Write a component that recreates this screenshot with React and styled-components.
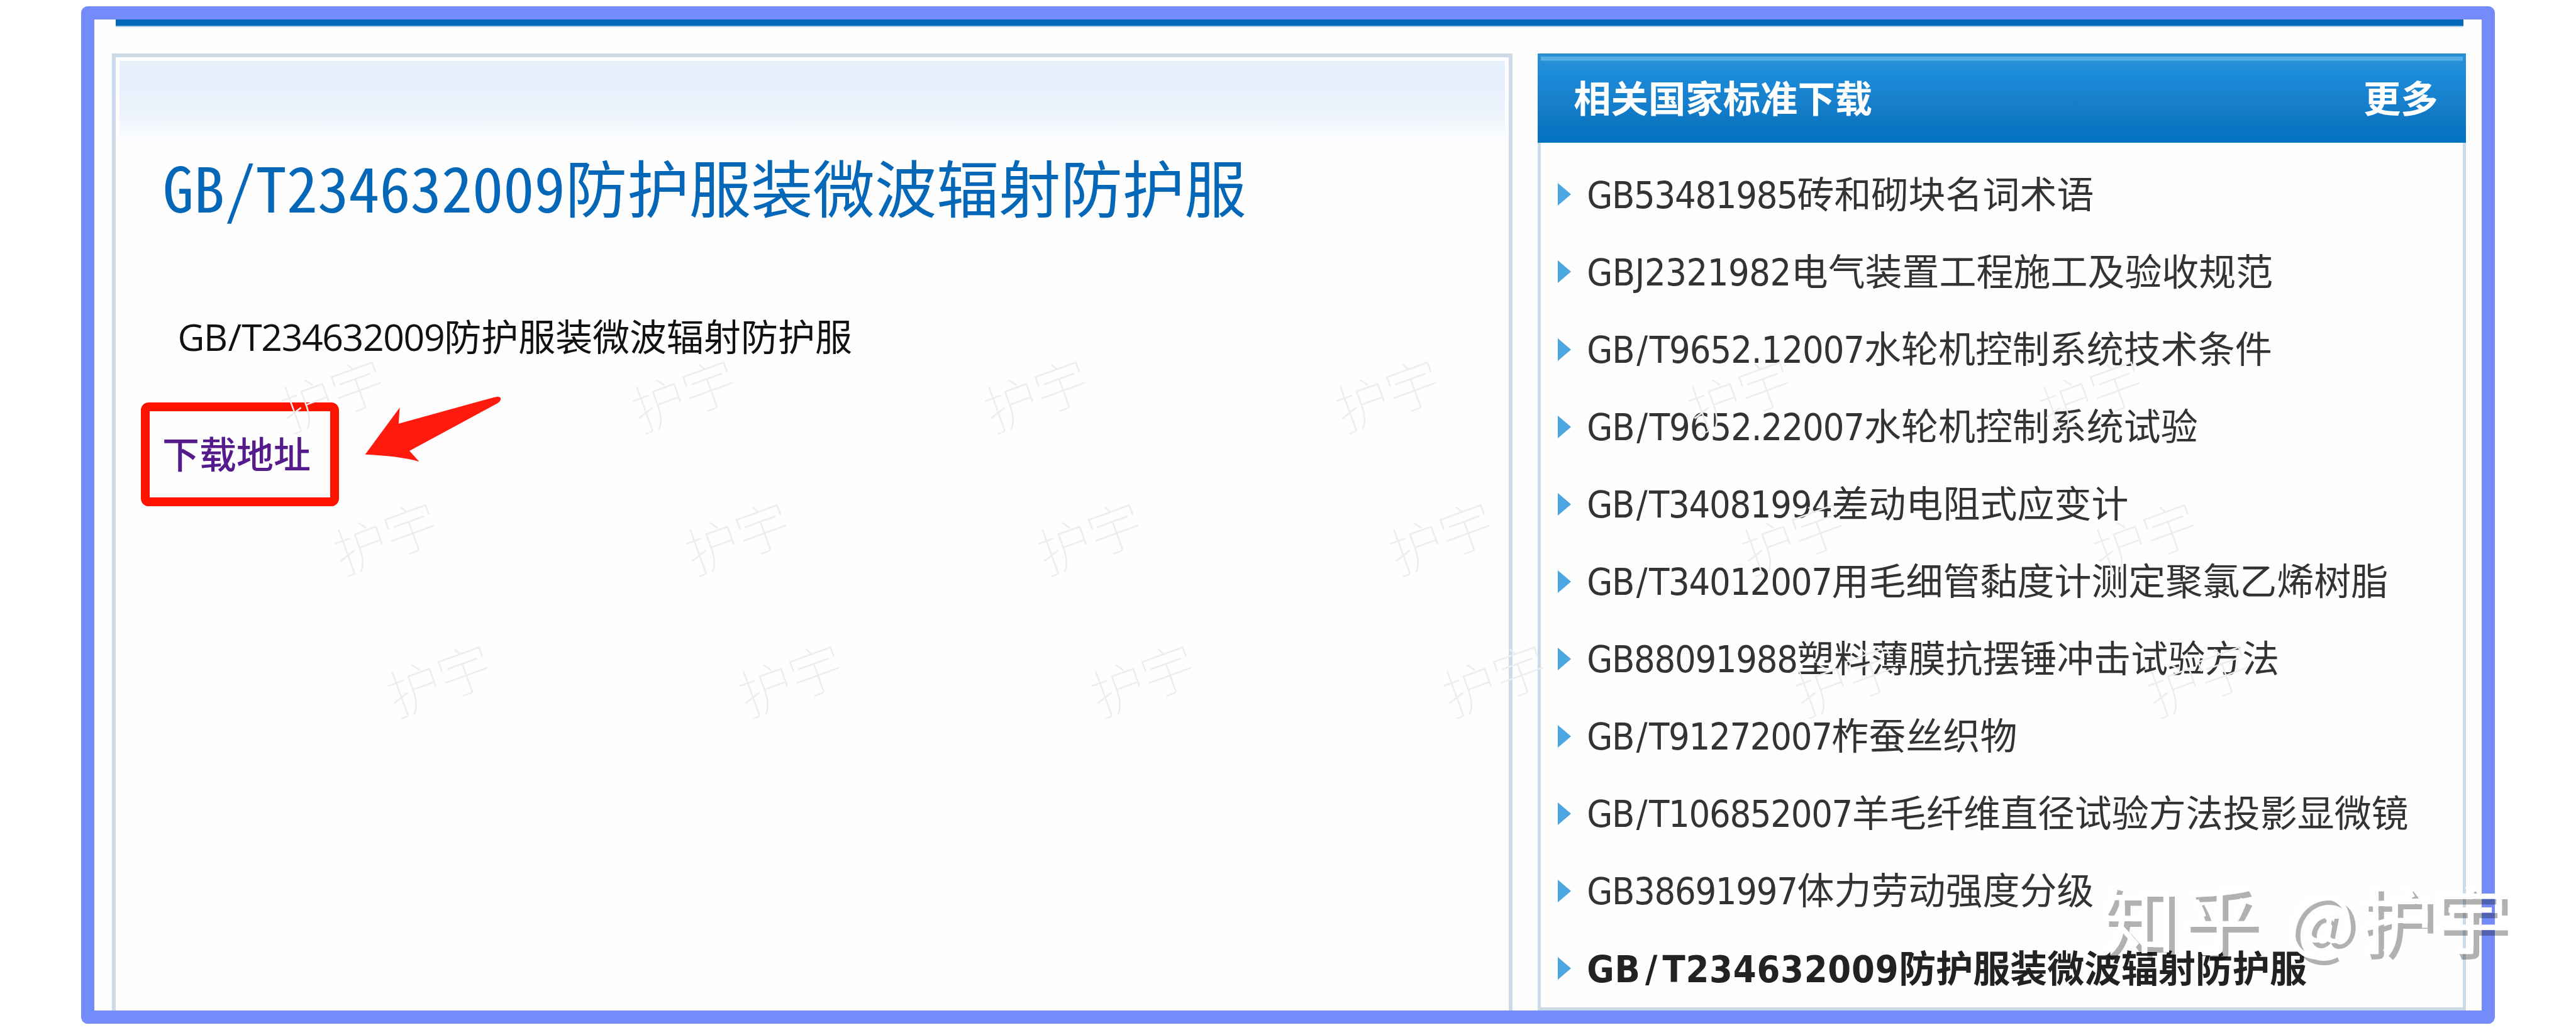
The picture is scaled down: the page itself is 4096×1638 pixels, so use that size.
import React from 'react';
import styled, { createGlobalStyle } from 'styled-components'

// the sheet is drawn on a 5000 wide grid
const u = (n) => `${n * 0.8192}px`

const GlobalStyle = createGlobalStyle`
    body {
        margin: 0;
        background: #ffffff;
        font-family: "Noto Sans CJK SC", sans-serif;
    }
`

const Page = styled.div`
    position: relative;
    box-sizing: border-box;
    width: ${u(5000)};
    height: ${u(1999)};
    padding: ${u(12)} ${u(157)};
    overflow: hidden;
`

const Frame = styled.div`
    box-sizing: border-box;
    display: flex;
    flex-direction: column;
    width: ${u(4686)};
    height: ${u(1975)};
    border: ${u(26)} solid #738bfb;
    border-radius: ${u(13)};
    background: #fefefe;
`

const TopBar = styled.div`
    flex: none;
    height: ${u(13)};
    margin: 0 ${u(36)} 0 ${u(42)};
    background: #0069b8;
    border-bottom: 2px solid #a9cde6;
`

const Columns = styled.div`
    flex: 1;
    display: flex;
    justify-content: space-between;
    margin: ${u(50.5)} ${u(31)} 0 ${u(35)};
`

const Article = styled.div`
    box-sizing: border-box;
    width: ${u(2718)};
    border: 6px solid #cbdae8;
    border-bottom: none;
    padding: ${u(7)} ${u(7)} 0;
`

const ArticleBody = styled.div`
    padding: ${u(183)} 0 0 ${u(41)};
    background: linear-gradient(#e5f1fb 0, #e8f0fb ${u(60)}, #ecf3fc ${u(100)}, #fdfeff ${u(160)}, #fefefe ${u(170)}) no-repeat;
`

const Title = styled.h1`
    margin: 0 0 ${u(193)} ${u(43)};
    font-size: ${u(120.2)};
    line-height: ${u(120)};
    font-weight: 400;
    font-feature-settings: "hwid";
    color: #0467b7;
    white-space: nowrap;
`

const Text = styled.p`
    margin: 0 0 ${u(95.4)} ${u(72)};
    font-size: ${u(72)};
    line-height: ${u(72)};
    color: #111111;
    white-space: nowrap;
`

const Code = styled.span`
    font-family: ${props => props.$plain ? '"Open Sans"' : '"DejaVu Sans Condensed", "DejaVu Sans"'}, sans-serif;
    font-stretch: ${props => props.$plain ? 'normal' : 'condensed'};
    letter-spacing: ${props => u(props.$spacing)};
    line-height: 0;
`

const Slash = styled.span`
    margin: 0 ${props => u(props.$gap)};
`

const DownloadRow = styled.div`
    display: flex;
    align-items: flex-start;
`

const DownloadLink = styled.a`
    box-sizing: border-box;
    display: flex;
    align-items: center;
    width: ${u(384.5)};
    height: ${u(202)};
    padding: 0 0 ${u(8)} ${u(25)};
    border: ${u(18)} solid #ff1200;
    border-radius: ${u(15)};
    font-size: ${u(72)};
    line-height: ${u(72)};
    font-weight: 500;
    color: #551a8b;
    white-space: nowrap;
`

const Arrow = styled.svg`
    display: block;
    width: ${u(270)};
    height: ${u(136)};
    margin: ${u(-16)} 0 0 ${u(49)};
`

const Related = styled.div`
    box-sizing: border-box;
    width: ${u(1802)};
    border: 5px solid #cbdae8;
    border-top: none;
`

const RelatedHeader = styled.div`
    box-sizing: border-box;
    display: flex;
    align-items: center;
    justify-content: space-between;
    height: ${u(174)};
    margin: 0 -5px;
    padding: 0 ${u(54)} ${u(6)} ${u(70)};
    background:
        linear-gradient(#58aee4, #58aee4) ${u(6)} ${u(6)} / calc(100% - ${u(12)}) ${u(8)} no-repeat,
        linear-gradient(#2c8fd4 0, #2790d6 8%, #1b8bda 24%, #1880cc 52%, #0b76c2 80%, #0072c2 100%);
    font-size: ${u(72.5)};
    line-height: ${u(72)};
    font-weight: 700;
    color: #ffffff;
`

const List = styled.ul`
    margin: 0;
    padding: ${u(20)} 0 0 ${u(33)};
    list-style: none;
`

const Item = styled.li`
    display: flex;
    align-items: center;
    height: ${u(150.25)};
    font-size: ${u(72)};
    line-height: ${u(72)};
    font-weight: ${props => props.$current ? 700 : 400};
    color: ${props => props.$current ? '#222222' : '#333333'};
    white-space: nowrap;
`

const Bullet = styled.i`
    margin: ${u(10)} ${u(31)} 0 0;
    border-left: ${u(26)} solid #4ba6e1;
    border-top: ${u(22)} solid transparent;
    border-bottom: ${u(22)} solid transparent;
`

const Stamp = styled.span`
    position: absolute;
    left: ${props => u(props.$x - 104)};
    top: ${props => u(props.$y - 52)};
    width: ${u(208)};
    font-size: ${u(104)};
    line-height: ${u(104)};
    font-weight: 100;
    color: #ededed;
    white-space: nowrap;
    transform: rotate(-20deg);
`

const Signature = styled.div`
    position: absolute;
    left: ${u(4076)};
    top: ${u(1698)};
    display: flex;
    align-items: center;
    font-size: ${u(144)};
    line-height: ${u(160)};
    color: #ffffff;
    text-shadow: ${u(11)} ${u(11)} 0 rgba(0, 0, 0, 0.3);
    white-space: nowrap;
`

const Brand = styled.span`
    width: ${u(361)};
    font-size: ${u(148)};
    letter-spacing: ${u(9)};
`

const At = styled.span`
    width: ${u(142)};
    font-size: ${u(140)};
`

const standards = [
    { code: 'GB53481985', name: '砖和砌块名词术语' },
    { code: 'GBJ2321982', name: '电气装置工程施工及验收规范', spacing: -0.6 },
    { code: 'GB/T9652.12007', name: '水轮机控制系统技术条件', spacing: -1.3 },
    { code: 'GB/T9652.22007', name: '水轮机控制系统试验', spacing: -1.3 },
    { code: 'GB/T34081994', name: '差动电阻式应变计' },
    { code: 'GB/T34012007', name: '用毛细管黏度计测定聚氯乙烯树脂' },
    { code: 'GB88091988', name: '塑料薄膜抗摆锤冲击试验方法' },
    { code: 'GB/T91272007', name: '柞蚕丝织物' },
    { code: 'GB/T106852007', name: '羊毛纤维直径试验方法投影显微镜' },
    { code: 'GB38691997', name: '体力劳动强度分级' },
    { code: 'GB/T234632009', name: '防护服装微波辐射防护服', current: true, spacing: 0.9 },
]

const stamps = []
for (let row = 0; row < 3; row++) {
    for (let col = 0; col < 6; col++) {
        stamps.push({ x: 643 + col * 683 + row * 104, y: 762 + row * 277 })
    }
}

function StandardCode({ code, spacing = -1.6, gap = 4.5, plain }) {
    const [prefix, rest] = code.split('/')
    return (
        <Code $plain={plain} $spacing={spacing}>
            {prefix}{rest && <Slash $gap={gap}>/</Slash>}{rest}
        </Code>
    )
}

export default function App() {
    return (
        <Page>
            <GlobalStyle />
            <Frame>
                <TopBar />
                <Columns>
                    <Article>
                        <ArticleBody>
                            <Title>GB/T234632009防护服装微波辐射防护服</Title>
                            <Text><StandardCode plain code="GB/T234632009" spacing={-1.7} gap={2} />防护服装微波辐射防护服</Text>
                            <DownloadRow>
                                <DownloadLink>下载地址</DownloadLink>
                                <Arrow viewBox="0 0 270 136">
                                    <path d="M2 117 L69 26 L67 57 L252 6 Q264 3 265 8 Q266 13 258 18 L88 110 L107 131 Q70 120 2 117 Z" fill="#ff1a0e" />
                                </Arrow>
                            </DownloadRow>
                        </ArticleBody>
                    </Article>
                    <Related>
                        <RelatedHeader>
                            <span>相关国家标准下载</span>
                            <span>更多</span>
                        </RelatedHeader>
                        <List>
                            {standards.map((item) => (
                                <Item key={item.code} $current={item.current}>
                                    <Bullet />
                                    <span>
                                        <StandardCode code={item.code} spacing={item.spacing} gap={item.current ? 9 : 4.5} />
                                        {item.name}
                                    </span>
                                </Item>
                            ))}
                        </List>
                    </Related>
                </Columns>
            </Frame>
            {stamps.map((s) => <Stamp key={`${s.x}-${s.y}`} $x={s.x} $y={s.y}>护宇</Stamp>)}
            <Signature>
                <Brand>知乎</Brand>
                <At>@</At>
                <span>护宇</span>
            </Signature>
        </Page>
    )
}
